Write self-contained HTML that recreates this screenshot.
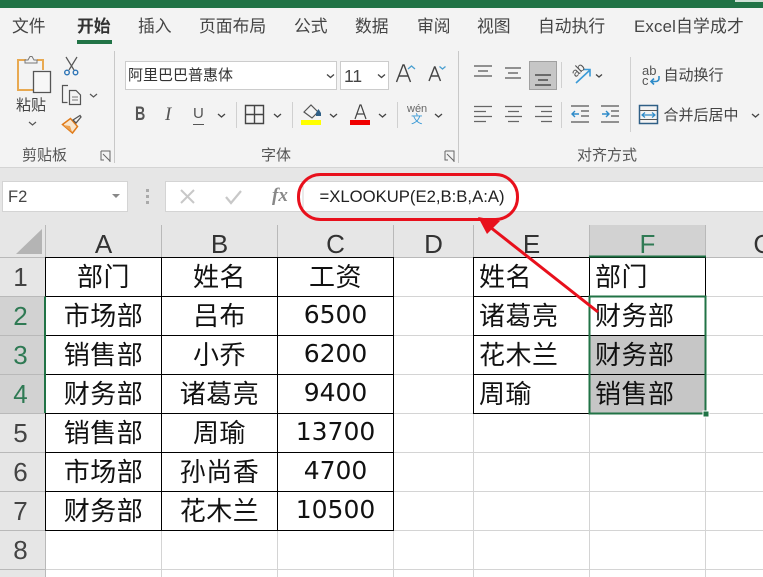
<!DOCTYPE html>
<html lang="zh"><head><meta charset="utf-8"><style>
html,body{margin:0;padding:0}
body{width:763px;height:577px;position:relative;overflow:hidden;background:#fff;font-family:"Liberation Sans","Noto Sans CJK SC",sans-serif;color:#444}
div,span{position:absolute;white-space:nowrap}
.t{font-size:16.800px;line-height:20px;top:17px;color:#444}
.s{font-size:15px;line-height:18px;color:#444}
.g{font-size:15px;line-height:16px;top:148px;color:#555}
.l{background:#c8c8c8;width:1px}
.h{font-size:26px;line-height:32px;color:#333;text-align:center;font-family:"Liberation Sans",sans-serif;top:228px;height:30px;font-weight:400}
.r{font-size:26px;line-height:38px;color:#444;text-align:center;left:0;width:41px;height:38px;font-family:"Liberation Sans",sans-serif}
.c{font-family:"Noto Sans CJK SC",sans-serif;font-size:26px;line-height:38px;height:38px;color:#111;text-align:center;letter-spacing:.5px}
.n{font-family:"DejaVu Sans",sans-serif;font-size:25px;letter-spacing:0}
.ca{left:46px;width:115px}.cb{left:162px;width:115px}.cc{left:278px;width:115px}
.le{left:479px;text-align:left}.lf{left:595px;text-align:left}
svg{position:absolute;overflow:visible}
</style></head><body>
<div style="left:0;top:0;width:763px;height:8px;background:#217346"></div>
<div style="left:735px;top:0;width:28px;height:2px;background:#cfe0d6"></div>
<div style="left:0;top:8px;width:763px;height:159px;background:#f3f3f3"></div>
<div style="left:0;top:167px;width:763px;height:58px;background:#e6e6e6;border-top:1px solid #d4d4d4;box-sizing:border-box"></div>

<div class="t" style="left:12px">文件</div>
<div class="t" style="left:77px;font-weight:700;color:#333">开始</div>
<div style="left:77px;top:40px;width:35px;height:4px;background:#217346"></div>
<div class="t" style="left:138px">插入</div>
<div class="t" style="left:199px">页面布局</div>
<div class="t" style="left:294px">公式</div>
<div class="t" style="left:355px">数据</div>
<div class="t" style="left:417px">审阅</div>
<div class="t" style="left:477px">视图</div>
<div class="t" style="left:538px">自动执行</div>
<div class="t" style="left:634px;letter-spacing:.2px">Excel自学成才</div>

<div class="l" style="left:114px;top:51px;height:112px"></div>
<div class="l" style="left:458px;top:51px;height:112px"></div>
<div class="l" style="left:236px;top:102px;height:26px;background:#d0d0d0"></div>
<div class="l" style="left:292px;top:102px;height:26px;background:#d0d0d0"></div>
<div class="l" style="left:397px;top:102px;height:26px;background:#d0d0d0"></div>
<div class="l" style="left:561px;top:62px;height:26px;background:#d0d0d0"></div>
<div class="l" style="left:561px;top:102px;height:26px;background:#d0d0d0"></div>
<div class="l" style="left:630px;top:57px;height:75px;background:#d0d0d0"></div>

<div style="left:125px;top:61px;width:212px;height:29px;background:#fff;border:1px solid #ccc;box-sizing:border-box"></div>
<div class="s" style="left:128px;top:67px;color:#333">阿里巴巴普惠体</div>
<div style="left:340px;top:61px;width:49px;height:29px;background:#fff;border:1px solid #ccc;box-sizing:border-box"></div>
<div class="s" style="left:344px;top:66px;font-size:17.500px;line-height:20px">11</div>

<svg style="left:0;top:0" width="763" height="167" fill="none">
<path d="M26 60h-8v30h15M37 60h6v10" stroke="#e8a951" stroke-width="2"/>
<path d="M25 63v-3h3l2-3.500h2l2 3.500h3v3z" fill="#f3f3f3" stroke="#777" stroke-width="1"/>
<path d="M33.500 71.500h17v21h-17z" fill="#f7f7f7" stroke="#555" stroke-width="1.300"/>
<path d="M66 57l8 13M77 57l-8 13" stroke="#555" stroke-width="1.200"/>
<circle cx="67" cy="72.500" r="2.300" stroke="#2e75b6" stroke-width="1.400"/><circle cx="75.500" cy="72.500" r="2.300" stroke="#2e75b6" stroke-width="1.400"/>
<path d="M68 85.500h-5.500v17h5M69.500 90.500h6.500l4.500 4.500v9.500h-11z" stroke="#555" stroke-width="1.200"/><path d="M72 97h6M72 100h6" stroke="#777"/>
<path d="M90 94l3.500 3 3.500-3M29 122l3.500 3 3.500-3" stroke="#555" stroke-width="1.200"/>
<path d="M62.500 124.500l8-6 7 8-5 6.500z" fill="#f8e6cf" stroke="#e07b1a" stroke-width="1.500"/><path d="M63 125l9 7-2-6z" fill="#eda14e"/>
<path d="M73 120l7-4.500 1 1.500-5 6z" fill="#f3f3f3" stroke="#555" stroke-width="1.300"/>
<path d="M101 151h9v11M101 151v9h3M103 154l7 7" stroke="#666" stroke-width="1"/>
<path d="M445 151h9v11M445 151v9h3M447 154l7 7" stroke="#666" stroke-width="1"/>

<path d="M327 74.500l3.500 3 3.500-3M378 74.500l3.500 3 3.500-3M218 114l3.500 3 3.500-3M274 114l3.500 3 3.500-3M330 114l3.500 3 3.500-3M379 114l3.500 3 3.500-3M435 114l3.500 3 3.500-3M596 74.500l3 2.500 3-2.500M752 114l3.500 3 3.500-3" stroke="#444" stroke-width="1.300"/>
<path d="M245.500 105.500h18v18h-18zM254.500 105.500v18M245.500 114.500h18" stroke="#444" stroke-width="1.400"/>
<path d="M304 112l7-7 7 7-6 6z" stroke="#555" stroke-width="1.200"/><path d="M316 113l2.500-4 2.500 4v3h-5z" fill="#2f5f86"/>
<rect x="301" y="120" width="20" height="5" fill="#ffff00"/>
<path d="M355 119l5-14h1l5 14M357 114h7" stroke="#444" stroke-width="1.200"/>
<rect x="350" y="120" width="20" height="5" fill="#f00000"/>
<path d="M396.500 82l6.500-17h1l6.500 17M399 76h9" stroke="#444" stroke-width="1.400"/><path d="M408 69l3.500-3 3.500 3" stroke="#4a9fd0" stroke-width="1.300"/>
<path d="M429 81l5.500-14h.5l5.500 14M431 76h8" stroke="#444" stroke-width="1.400"/><path d="M439.500 66.500l3 2.500 3-2.500" stroke="#4a9fd0" stroke-width="1.300"/>

<path d="M474 66h18M478 71h10M474 76h18" stroke="#555" stroke-width="1.300"/>
<path d="M505 68h16M508 73h10M505 78h16" stroke="#555" stroke-width="1.300"/>
<rect x="529.500" y="61.500" width="27" height="28" fill="#c6c6c6" stroke="#a0a0a0"/>
<path d="M535 75h16M538 80h10M535 85h16" stroke="#333" stroke-width="1.300"/>
<path d="M474 106.500h18M474 111.500h12M474 116.500h18M474 121.500h12" stroke="#666" stroke-width="1.300"/>
<path d="M505 106.500h17M508 111.500h11M505 116.500h17M508 121.500h11" stroke="#666" stroke-width="1.300"/>
<path d="M535 106.500h17M541 111.500h11M535 116.500h17M541 121.500h11" stroke="#666" stroke-width="1.300"/>
<path d="M571 106h18M581 111h8M581 116h8M571 122h18" stroke="#555" stroke-width="1.300"/><path d="M579 114h-7M575 111l-3 3 3 3" stroke="#2e8bc9" stroke-width="1.400"/>
<path d="M601 106h18M611 111h8M611 116h8M601 122h18" stroke="#555" stroke-width="1.300"/><path d="M602 114h7M606 111l3 3-3 3" stroke="#2e8bc9" stroke-width="1.400"/>
<path d="M576 83l14-13M583 69.500h7v7" stroke="#3b9ad6" stroke-width="1.600"/>
<path d="M659 76v2.500a3 3 0 0 1-3 3h-5M654 78.500l-3 3 3 3" stroke="#2e8bc9" stroke-width="1.600"/>
<rect x="639.500" y="105.500" width="18" height="18" stroke="#2f5f86" stroke-width="1.500"/><path d="M640 110.500h17M640 119.500h17" stroke="#555"/><path d="M642 115h13M645 112.500l-3 2.500 3 2.500M652 112.500l3 2.500-3 2.500" stroke="#2e8bc9" stroke-width="1.200"/>
</svg>

<div class="s" style="left:16px;top:97px;color:#444">粘贴</div>
<div class="g" style="left:22px">剪贴板</div>
<div class="g" style="left:261px">字体</div>
<div class="g" style="left:577px">对齐方式</div>

<div style="left:135px;top:104px;font-size:19px;font-weight:700;line-height:22px;color:#555;transform:scaleX(.75);transform-origin:left">B</div>
<div style="left:165px;top:104px;font-size:19px;font-style:italic;line-height:22px;font-family:'Liberation Serif',serif;color:#555">I</div>
<div style="left:193px;top:104px;font-size:15px;line-height:20px;color:#555;border-bottom:1px solid #555;height:20px">U</div>
<div style="left:407px;top:103px;font-size:11px;line-height:12px;color:#666">wén</div>
<div style="left:411px;top:114px;font-size:11.500px;line-height:12px;color:#3b9ad6">文</div>
<div style="left:571px;top:63px;font-size:12.500px;line-height:14px;color:#555;transform:rotate(-45deg)">ab</div>
<div style="left:642px;top:65px;font-size:13px;line-height:11px;color:#555">ab</div>
<div style="left:642px;top:75px;font-size:13px;line-height:11px;color:#555">c</div>
<div class="s" style="left:663.500px;top:67px">自动换行</div>
<div class="s" style="left:663.500px;top:107px">合并后居中</div>

<div style="left:2px;top:181px;width:126px;height:31px;background:#fff;border:1px solid #d4d4d4;box-sizing:border-box"></div>
<div style="left:8px;top:187px;font-size:16.500px;line-height:20px;color:#444">F2</div>
<div style="left:112px;top:194px;width:0;height:0;border-left:4px solid transparent;border-right:4px solid transparent;border-top:4px solid #888"></div>
<div style="left:146px;top:189px;width:3px;height:3px;background:#aaa;box-shadow:0 6px 0 #aaa,0 12px 0 #aaa"></div>
<div style="left:165px;top:181px;width:598px;height:31px;background:#fff;border:1px solid #d4d4d4;border-right:0;box-sizing:border-box"></div>
<svg style="left:0;top:0" width="763" height="225" fill="none"><path d="M181 190l13 13M194 190l-13 13" stroke="#c8c8c8" stroke-width="2"/><path d="M226 197l5 6 10-12" stroke="#c8c8c8" stroke-width="2.200"/><path d="M303 182v30" stroke="#d4d4d4"/></svg>
<div style="left:272px;top:185px;font-family:'Liberation Serif',serif;font-style:italic;font-weight:700;font-size:19px;line-height:22px;color:#888">fx</div>
<div style="left:319.500px;top:185px;font-family:'Liberation Sans',sans-serif;font-size:16.700px;line-height:24px;color:#222">=XLOOKUP(E2,B:B,A:A)</div>

<div style="left:0;top:225px;width:763px;height:32px;background:#e6e6e6"></div>
<div style="left:0;top:225px;width:45px;height:352px;background:#e6e6e6"></div>
<div style="left:589px;top:225px;width:117px;height:32px;background:#d2d2d2"></div>
<div style="left:0;top:296px;width:45px;height:117px;background:#d2d2d2"></div>
<svg style="left:0;top:0" width="763" height="577" shape-rendering="crispEdges">
<path d="M16 254L42 229V254Z" fill="#b4b4b4" shape-rendering="auto"/>
<path fill="none" stroke="#d4d4d4" d="M45.500 258V577M161.500 258V577M277.500 258V577M393.500 258V577M473.500 258V577M589.500 258V577M705.500 258V577M46 296.500H763M46 335.500H763M46 374.500H763M46 413.500H763M46 452.500H763M46 491.500H763M46 530.500H763M46 569.500H763"/>
<path fill="none" stroke="#b9b9b9" d="M45.500 225V257M161.500 225V257M277.500 225V257M393.500 225V257M473.500 225V257M589.500 225V257M705.500 225V257M0 257.500H763M0 296.500H45M0 335.500H45M0 374.500H45M0 413.500H45M0 452.500H45M0 491.500H45M0 530.500H45M0 569.500H45M45.500 225V577"/>
<rect x="590" y="336" width="115" height="77" fill="#c6c6c6"/>
<path fill="none" stroke="#000" d="M45.500 257.500H393.500M45.500 296.500H393.500M45.500 335.500H393.500M45.500 374.500H393.500M45.500 413.500H393.500M45.500 452.500H393.500M45.500 491.500H393.500M45.500 530.500H393.500M45.500 257V531M161.500 257V531M277.500 257V531M393.500 257V531M473.500 257.500H705.500M473.500 296.500H705.500M473.500 335.500H705.500M473.500 374.500H705.500M473.500 413.500H705.500M473.500 257V414M589.500 257V414M705.500 257V297"/>
<path d="M45 296.500V413" stroke="#217346" fill="none" stroke-width="2"/>
<path d="M589 256.500H706" stroke="#217346" fill="none" stroke-width="2"/>
<rect x="589.500" y="296.500" width="116" height="117" fill="none" stroke="#217346" stroke-width="2"/>
<rect x="703" y="411" width="6" height="6" fill="#217346" stroke="#fff" stroke-width="1"/>
</svg>

<div class="h" style="left:46px;width:115px">A</div>
<div class="h" style="left:162px;width:115px">B</div>
<div class="h" style="left:278px;width:115px">C</div>
<div class="h" style="left:394px;width:79px">D</div>
<div class="h" style="left:474px;width:115px">E</div>
<div class="h" style="left:590px;width:115px;color:#2f7a54">F</div>
<div class="h" style="left:706px;width:115px">G</div>

<div class="r" style="top:258px">1</div>
<div class="r" style="top:297px;color:#2f7a54">2</div>
<div class="r" style="top:336px;color:#2f7a54">3</div>
<div class="r" style="top:375px;color:#2f7a54">4</div>
<div class="r" style="top:414px">5</div>
<div class="r" style="top:453px">6</div>
<div class="r" style="top:492px">7</div>
<div class="r" style="top:531px">8</div>

<div class="c ca" style="top:257px">部门</div><div class="c cb" style="top:257px">姓名</div><div class="c cc" style="top:257px">工资</div>
<div class="c ca" style="top:296px">市场部</div><div class="c cb" style="top:296px">吕布</div><div class="c cc n" style="top:296px">6500</div>
<div class="c ca" style="top:335px">销售部</div><div class="c cb" style="top:335px">小乔</div><div class="c cc n" style="top:335px">6200</div>
<div class="c ca" style="top:374px">财务部</div><div class="c cb" style="top:374px">诸葛亮</div><div class="c cc n" style="top:374px">9400</div>
<div class="c ca" style="top:413px">销售部</div><div class="c cb" style="top:413px">周瑜</div><div class="c cc n" style="top:413px">13700</div>
<div class="c ca" style="top:452px">市场部</div><div class="c cb" style="top:452px">孙尚香</div><div class="c cc n" style="top:452px">4700</div>
<div class="c ca" style="top:491px">财务部</div><div class="c cb" style="top:491px">花木兰</div><div class="c cc n" style="top:491px">10500</div>

<div class="c le" style="top:257px">姓名</div><div class="c lf" style="top:257px">部门</div>
<div class="c le" style="top:296px">诸葛亮</div><div class="c lf" style="top:296px">财务部</div>
<div class="c le" style="top:335px">花木兰</div><div class="c lf" style="top:335px">财务部</div>
<div class="c le" style="top:374px">周瑜</div><div class="c lf" style="top:374px">销售部</div>

<svg style="left:0;top:0" width="763" height="577" fill="none">
<rect x="298.500" y="174.500" width="219" height="45" rx="22" stroke="#e8101c" stroke-width="3"/>
<path d="M598 312L490 227" stroke="#e8101c" stroke-width="3"/>
<path d="M478 217L500 221L487 234Z" fill="#e8101c"/>
</svg>
</body></html>
